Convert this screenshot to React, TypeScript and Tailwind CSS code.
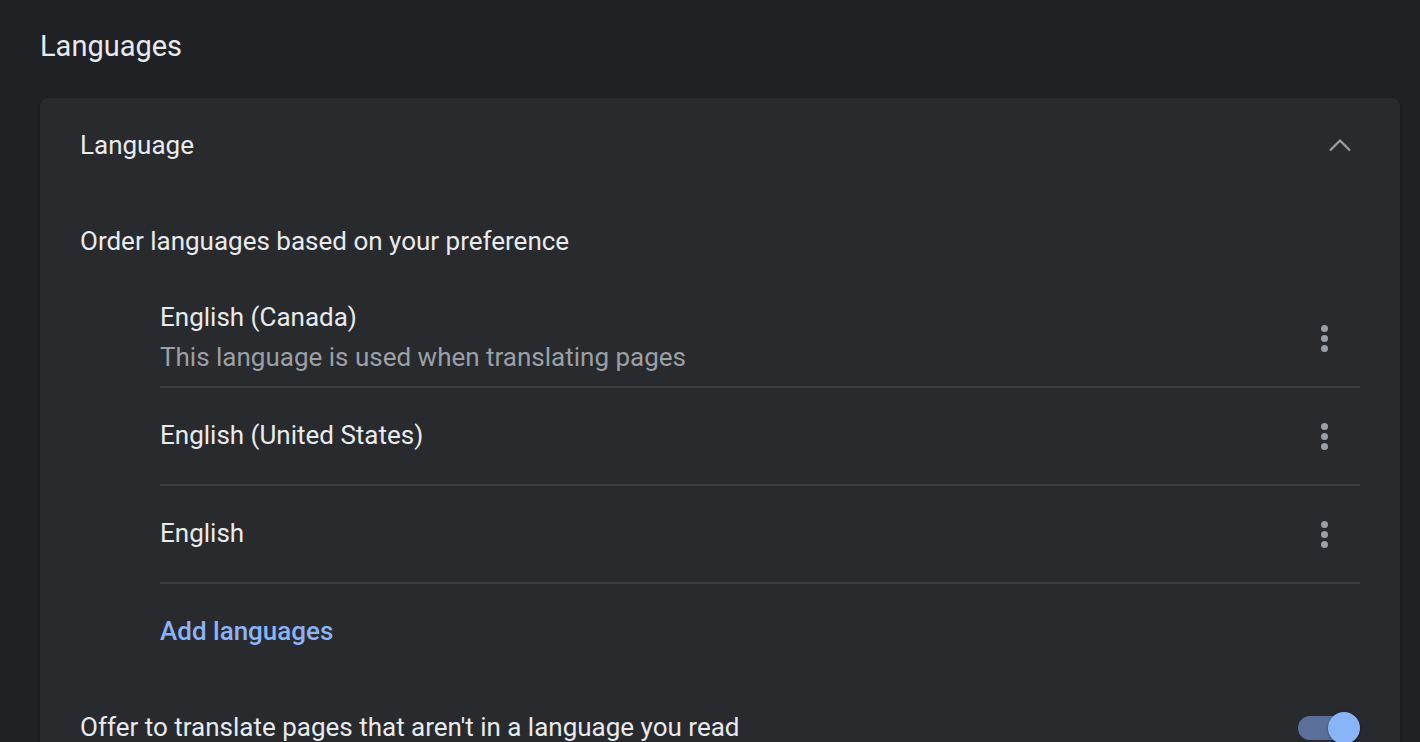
const languages = [
  { name: "English (Canada)", note: "This language is used when translating pages" },
  { name: "English (United States)" },
  { name: "English" },
];

function Kebab() {
  return (
    <div className="flex flex-col items-center gap-[3px] w-[48px]">
      <span className="block w-[7px] h-[7px] rounded-full bg-[#9aa0a6]" />
      <span className="block w-[7px] h-[7px] rounded-full bg-[#9aa0a6]" />
      <span className="block w-[7px] h-[7px] rounded-full bg-[#9aa0a6]" />
    </div>
  );
}

export default function App() {
  return (
    <div
      className="w-[1420px] h-[742px] overflow-hidden bg-[#202124] text-[#e8eaed] px-[40px]"
      style={{ fontFamily: "Roboto, 'Liberation Sans', sans-serif" }}
    >
      <h2 className="text-[29px] leading-none pt-[32px] pb-[37px] font-normal">Languages</h2>

      <div className="w-[1360px] bg-[#292a2d] rounded-[8px] shadow-[0_1px_3px_rgba(0,0,0,0.35)] px-[40px]">
        <div className="h-[96px] flex items-center justify-between">
          <span className="text-[26px] -translate-y-px">Language</span>
          <svg width="24" height="24" viewBox="0 0 24 24" className="mr-[8px]">
            <path d="M2 16.5 L12 6.5 L22 16.5" fill="none" stroke="#9aa0a6" strokeWidth="2.2" />
          </svg>
        </div>

        <div className="h-[96px] flex items-center text-[26px]">
          <span className="-translate-y-px">Order languages based on your preference</span>
        </div>

        <div className="pl-[80px]">
          {languages.map((l) => (
            <div key={l.name} className="h-[98px] flex items-center justify-between border-b-2 border-[#3c3d40]">
              <div className="flex flex-col -translate-y-px">
                <span className="text-[26px] leading-[40px]">{l.name}</span>
                {l.note && <span className="text-[26px] leading-[40px] text-[#9aa0a6]">{l.note}</span>}
              </div>
              <div className="mr-[12px]">
                <Kebab />
              </div>
            </div>
          ))}
          <div className="h-[96px] flex items-center">
            <span className="text-[26px] font-medium text-[#8ab4f8] -translate-y-px">Add languages</span>
          </div>
        </div>

        <div className="h-[96px] flex items-center justify-between">
          <span className="text-[26px] -translate-y-px">Offer to translate pages that aren't in a language you read</span>
          <div className="relative w-[62px] h-[32px] flex items-center">
            <div className="w-[60px] h-[24px] rounded-full bg-[#5b7098]" />
            <div className="absolute right-0 top-0 w-[32px] h-[32px] rounded-full bg-[#8ab4f8] shadow-[0_1px_3px_rgba(0,0,0,0.4)]" />
          </div>
        </div>
      </div>
    </div>
  );
}
